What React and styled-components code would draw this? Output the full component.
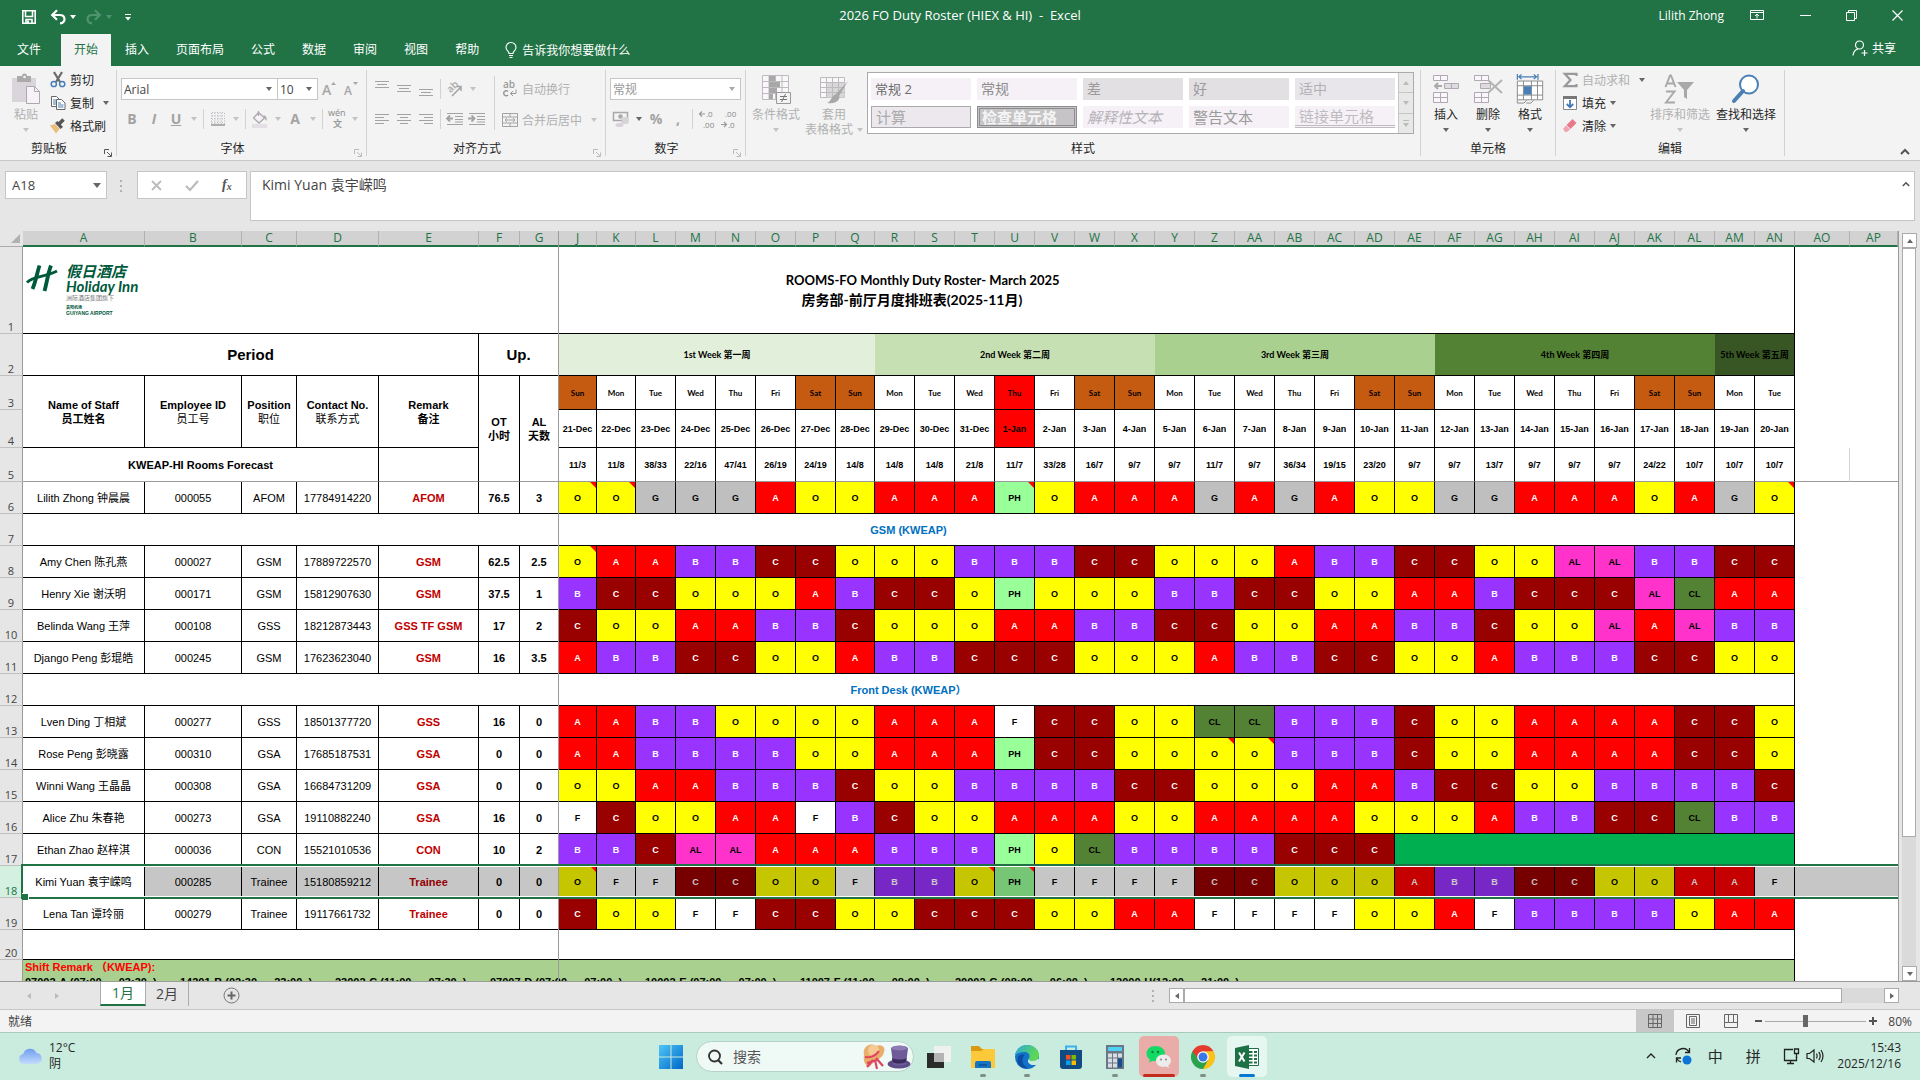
import React from "react";
import styled, { createGlobalStyle, css } from "styled-components";

const UI = `"Open Sans", "Noto Sans CJK SC", sans-serif`;
const SHEET = `"Liberation Sans", "Noto Sans CJK SC", sans-serif`;
const CALIBRI = `Lato, "Noto Sans CJK SC", sans-serif`;

const COLUMNS = [
  ["A", 122], ["B", 97], ["C", 55], ["D", 82], ["E", 100], ["F", 41], ["G", 39],
  ["J", 38], ["K", 39], ["L", 40], ["M", 40], ["N", 40], ["O", 40], ["P", 40], ["Q", 39],
  ["R", 40], ["S", 40], ["T", 40], ["U", 40], ["V", 40], ["W", 40], ["X", 40], ["Y", 40],
  ["Z", 40], ["AA", 40], ["AB", 40], ["AC", 40], ["AD", 40], ["AE", 40], ["AF", 40],
  ["AG", 40], ["AH", 40], ["AI", 40], ["AJ", 40], ["AK", 40], ["AL", 40], ["AM", 40],
  ["AN", 40], ["AO", 55],
];

const WEEKS = [
  { label: "1st Week 第一周", span: 8, bg: "#e2efda" },
  { label: "2nd Week 第二周", span: 7, bg: "#c6e0b4" },
  { label: "3rd Week 第三周", span: 7, bg: "#a9d08e" },
  { label: "4th Week 第四周", span: 7, bg: "#548235" },
  { label: "5th Week 第五周", span: 2, bg: "#375623" },
];

const DAY_NAMES = ["Sun", "Mon", "Tue", "Wed", "Thu", "Fri", "Sat"];
const HOLIDAY = 11;
const DAYS = Array.from({ length: 31 }, (_, i) => {
  const name = DAY_NAMES[i % 7];
  let bg = "#fff";
  if (name === "Sat" || name === "Sun") bg = "#c55a11";
  if (i === HOLIDAY) bg = "#ff0000";
  return { name, date: i < 11 ? `${21 + i}-Dec` : `${i - 10}-Jan`, bg };
});

const FORECAST =
  "11/3 11/8 38/33 22/16 47/41 26/19 24/19 14/8 14/8 14/8 21/8 11/7 33/28 16/7 9/7 9/7 11/7 9/7 36/34 19/15 23/20 9/7 9/7 13/7 9/7 9/7 9/7 24/22 10/7 10/7 10/7".split(" ");

const SHIFTS = {
  O: ["#ffff00", "#000"],
  A: ["#ff0000", "#fff"],
  B: ["#9933ff", "#fff"],
  C: ["#990000", "#fff"],
  G: ["#bfbfbf", "#000"],
  F: ["#ffffff", "#000"],
  PH: ["#99ff99", "#000"],
  AL: ["#ff33cc", "#000"],
  CL: ["#548235", "#000"],
};

// a star after the code marks a cell that carries a comment
const ROWS = [
  { n: 6, name: "Lilith Zhong 钟晨晨", id: "000055", pos: "AFOM", tel: "17784914220", remark: "AFOM", ot: "76.5", al: "3", s: "O* O* G G G A O O A A A PH* O A A A G A G A O O G G A A A O A G O*" },
  { n: 7, title: "GSM (KWEAP)" },
  { n: 8, name: "Amy Chen 陈孔燕", id: "000027", pos: "GSM", tel: "17889722570", remark: "GSM", ot: "62.5", al: "2.5", s: "O* A A B B C C O O O B B B C C O O O A B B C C O O AL AL B B C C" },
  { n: 9, name: "Henry Xie 谢沃明", id: "000171", pos: "GSM", tel: "15812907630", remark: "GSM", ot: "37.5", al: "1", s: "B C C O O O A B C C O PH O O O B B C C O O A A B C C C AL CL A A" },
  { n: 10, name: "Belinda Wang 王萍", id: "000108", pos: "GSS", tel: "18212873443", remark: "GSS TF GSM", ot: "17", al: "2", s: "C O O A A B B C O O O A A B B C C O O A A B B C O O AL A AL B B" },
  { n: 11, name: "Django Peng 彭琨皓", id: "000245", pos: "GSM", tel: "17623623040", remark: "GSM", ot: "16", al: "3.5", s: "A B B C C O O A B B C C C O O O A B B C C O O A B B B C C O O" },
  { n: 12, title: "Front Desk (KWEAP）" },
  { n: 13, name: "Lven Ding 丁相斌", id: "000277", pos: "GSS", tel: "18501377720", remark: "GSS", ot: "16", al: "0", s: "A A B B O O O O A A A F C C O O CL CL B B B C O O A A A A C C O" },
  { n: 14, name: "Rose Peng 彭晓露", id: "000310", pos: "GSA", tel: "17685187531", remark: "GSA", ot: "0", al: "0", s: "A A B B B B O O A A A PH C C O O O* O* B B B C O O A A A A C C O" },
  { n: 15, name: "Winni Wang 王晶晶", id: "000308", pos: "GSA", tel: "16684731209", remark: "GSA", ot: "0", al: "0", s: "O O A A B B B C O O B B B B C C O O O A A B C C O O B B B B C" },
  { n: 16, name: "Alice Zhu 朱春艳", id: "000273", pos: "GSA", tel: "19110882240", remark: "GSA", ot: "16", al: "0", s: "F C O O A A F B C O O A A A O O A A A A O O O A B B C C CL B B" },
  { n: 17, name: "Ethan Zhao 赵梓淇", id: "000036", pos: "CON", tel: "15521010536", remark: "CON", ot: "10", al: "2", s: "B B C AL AL A A A B B B PH O CL B B B B C C C" },
  { n: 18, name: "Kimi Yuan 袁宇嵘鸣", id: "000285", pos: "Trainee", tel: "15180859212", remark: "Trainee", ot: "0", al: "0", selected: true, s: "O* F F C C O O F B B O* PH* F F F F C C O O O A B B C C O O A A F" },
  { n: 19, name: "Lena Tan 谭玲丽", id: "000279", pos: "Trainee", tel: "19117661732", remark: "Trainee", ot: "0", al: "0", s: "C O O F F C C O O C C C O O A A F F F F O O A F B B B B O A A" },
];

const LEGEND = [
  "07002-A (07:00 — 03:30  )", "14201-B (02:30 — 23:00  )", "23002-C (11:00 — 07:30  )",
  "07007-D (07:00 — 07:00  )", "10002-E (07:00 — 07:00  )", "11007-F (11:00 — 08:00  )",
  "20002-G (08:00 — 06:00  )", "12000-H(12:00 — 21:00  )",
];

const GlobalStyle = createGlobalStyle`
  * { box-sizing: border-box; }
  body { margin: 0; font-family: ${UI}; font-size: 12px; color: #262626; overflow: hidden; }
  button, input, select { font: inherit; color: inherit; margin: 0; padding: 0; border: 0; background: none; border-radius: 0; }
  svg { display: block; flex: none; overflow: visible; }
`;

/* ---------- icons ---------- */

const Svg = ({ w = 16, h = w, box, children, ...rest }) => (
  <svg width={w} height={h} viewBox={box || `0 0 ${w} ${h}`} fill="none" aria-hidden="true" {...rest}>{children}</svg>
);

const Caret = ({ color = "#666", up }) => (
  <Svg w={6} h={4}><path d={up ? "M0 4h6L3 0z" : "M0 0h6L3 4z"} fill={color} /></Svg>
);

const Chevron = ({ w = 10, color = "#555", sw = 2 }) => (
  <Svg w={w} h={w * 0.6} box="0 0 10 6"><path d="M1 5l4-4 4 4" stroke={color} strokeWidth={sw} /></Svg>
);

const SaveIcon = () => (
  <Svg w={16}><path d="M1.8 1.8h12.4v12.4H1.8z M4.5 2v5.500h7V2 M5 14v-3.500h6V14" stroke="#fff" strokeWidth="1.600" /><path d="M6 11.500h2v3H6z" fill="#fff" /></Svg>
);

const UndoIcon = ({ flip, color = "#fff" }) => (
  <Svg w={16} transform={flip ? "scale(-1 1)" : undefined}>
    <path d="M2.500 6h7c3.400 0 5 2 5 4.200S13 14 10 14.300" stroke={color} strokeWidth="2.200" />
    <path d="M7 1.200L2.200 6 7 10.800" stroke={color} strokeWidth="2.200" />
  </Svg>
);

const PasteIcon = () => (
  <Svg w={30}>
    <path d="M1 4h24v24H1z" fill="#d9d5da" />
    <path d="M6 2h5a2.500 2.500 0 0 1 5 0h4v6H6z" fill="#aaa" /><circle cx="13.500" cy="3" r="1.300" fill="#f3f3f3" />
    <path d="M15.500 12.500h8l5 5v12h-13z" fill="#f7f2f9" stroke="#aaa" /><path d="M23.500 12.500v5h5" stroke="#aaa" />
  </Svg>
);

const CutIcon = () => (
  <Svg w={16}>
    <path d="M4 0l6 10M12 0L6 10" stroke="#6a6a6a" strokeWidth="2.200" />
    <circle cx="3.800" cy="12" r="2.600" stroke="#4a7fb5" strokeWidth="1.500" /><circle cx="12.200" cy="12" r="2.600" stroke="#4a7fb5" strokeWidth="1.500" />
  </Svg>
);

const CopyIcon = () => (
  <Svg w={16}>
    <path d="M1.500 1.500h5l3 3v7h-8z" fill="#fff" stroke="#666" /><path d="M3 5h4M3 7h4M3 9h4" stroke="#4a7fb5" />
    <path d="M6.500 4.500h5l3.500 3.500v6.500h-8.500z" fill="#fff" stroke="#666" /><path d="M8 8h3M8 10h5.500M8 12h5.500" stroke="#4a7fb5" />
  </Svg>
);

const PainterIcon = () => (
  <Svg w={16}>
    <path d="M0 7.500l5-1.500 4.500 5L6 15.500z" fill="#eabd78" />
    <path d="M5 5l2.500-2 5.500 6-2.500 2z" fill="#555" /><path d="M9 6l4.500-4.500" stroke="#555" strokeWidth="3.500" />
  </Svg>
);

const LauncherIcon = ({ color = "#777" }) => (
  <Svg w={8}><path d="M.5 5V.5H5 M3 3l4 4M7.500 3.500v4h-4" stroke={color} /></Svg>
);

const GlyphA = ({ big, up }) => (
  <Svg w={16}>
    <text x="1" y="14" fontSize={big ? 14 : 12} fontWeight="600" fill="#a6a6a6">A</text>
    <path d={up ? "M10 4h5l-2.500-3z" : "M10 1h5l-2.500 3z"} fill="#a6a6a6" />
  </Svg>
);

const BorderIcon = () => (
  <Svg w={14}>
    <path d="M.5 1v11M3.800 1v11M7 1v11M10.300 1v11M13.500 1v11M1 .5h12M1 3.800h12M1 7h12M1 10.300h12" stroke="#b9b4bb" strokeDasharray="1 1.500" />
    <path d="M0 13h14" stroke="#999" strokeWidth="1.500" />
  </Svg>
);

const FillIcon = () => (
  <Svg w={18}>
    <path d="M1 14h15v4H1z" fill="#e4dfe6" />
    <path d="M7.500 2.500l6 5.500-5.500 5L2.500 8z M7.500 6V1" stroke="#aaa" strokeWidth="1.300" fill="#f7f2f9" /><path d="M12.500 5c2 .5 4 3 3 6l-2-3z" fill="#aaa" />
  </Svg>
);

const AlignIcon = ({ lines }) => (
  <Svg w={16}>
    {lines.map(([x, y, w]) => <path key={y} d={`M${x} ${y + 0.5}h${w}`} stroke="#a3a3a3" />)}
  </Svg>
);

const OrientIcon = () => (
  <Svg w={18}>
    <text x="2" y="11" fontSize="10" fontWeight="600" fill="#aaa" transform="rotate(-45 6 9)">ab</text>
    <path d="M6 16L15 7M15 11V6.500h-4.500" stroke="#a3a3a3" strokeWidth="1.500" />
  </Svg>
);

const WrapIcon = () => (
  <Svg w={16}>
    <text x="1" y="7" fontSize="10" fontWeight="600" fill="#999">ab</text>
    <path d="M6 10.500a2.500 2.500 0 1 0 0 3.500" stroke="#999" strokeWidth="1.500" />
    <path d="M14 8.500v4H8.500M11 10l-2.500 2.500L11 15" stroke="#999" />
  </Svg>
);

const IndentIcon = ({ right }) => (
  <Svg w={18}>
    <path d="M1 3.500h16M9 6.500h8M9 9.500h8M1 14.500h16M9 12h8" stroke="#a3a3a3" />
    <path d={right ? "M0 8.500h6M3.500 5.500l3 3-3 3" : "M1 8.500h6M4 5.500l-3 3 3 3"} stroke="#a3a3a3" strokeWidth="1.800" />
  </Svg>
);

const MergeIcon = () => (
  <Svg w={16}>
    <path d="M.5 1.500h15v13H.5zM.5 5h15M.5 11h15M8 1.500V5M8 11v3.500" stroke="#a3a3a3" />
    <path d="M3 8h10M5 6L3 8l2 2M11 6l2 2-2 2" stroke="#a3a3a3" />
  </Svg>
);

const MoneyIcon = () => (
  <Svg w={18}>
    <path d="M1.500 2.500h14v8h-14z" stroke="#a8a8a8" strokeWidth="1.500" /><circle cx="8.500" cy="6.500" r="2.200" fill="#a8a8a8" />
    <g fill="#d8d3d9"><ellipse cx="13" cy="9" rx="4" ry="2" /><ellipse cx="13" cy="12" rx="4" ry="2" /><ellipse cx="7.500" cy="15" rx="4" ry="2" /></g>
  </Svg>
);

const DecimalIcon = ({ more }) => (
  <Svg w={18} h={20}>
    <text x={more ? 8 : 5} y="8" fontSize="8" fill="#888">{more ? ".0" : ".00"}</text>
    <text x={more ? 5 : 8} y="19" fontSize="8" fill="#888">{more ? ".00" : ".0"}</text>
    <path d={more ? "M1 5h6M4 2.500L1.500 5 4 7.500" : "M1 15.500h6M4 13l2.500 2.500L4 18"} stroke="#999" strokeWidth="1.200" />
  </Svg>
);

const CondIcon = () => (
  <Svg w={30}>
    <path d="M1.500 1.500h26v24h-26zM1.500 7.500h26M1.500 13.500h26M1.500 19.500h26M8 1.500v24M14.500 1.500v24M21 1.500v24" stroke="#bcbcbc" fill="#faf6fb" />
    <path d="M8 2h6v5H8zM8 8h11v5H8zM8 14h8v5H8zM8 20h4v5H8z" fill="#a8a8a8" />
    <path d="M15.500 18.500h14v11h-14z" fill="#f3f3f3" stroke="#999" /><path d="M19 22.500h7M19 25.500h7M24.500 20l-4 8" stroke="#777" />
  </Svg>
);

const TableFmtIcon = () => (
  <Svg w={30}>
    <path d="M1.500 3.500h24v20h-24z" fill="#faf6fb" stroke="#bcbcbc" /><path d="M7.500 8.500h18v15h-18z" fill="#d9d6da" />
    <path d="M1.500 8.500h24M1.500 13.500h24M1.500 18.500h24M7.500 3.500v20M13.500 3.500v20M19.500 3.500v20" stroke="#bcbcbc" />
    <path d="M29 7l-9 15-3-2z" fill="#a8a8a8" /><path d="M17 20c3 0 4 2 3 5-2 4-7 5-12 4 4-1 4-7 9-9z" fill="#a8a8a8" />
  </Svg>
);

const InsertIcon = () => (
  <Svg w={28} h={30}>
    <path d="M1.500 1.500h14v5h-14zM8.500 1.500v5M1.500 18.500h14v10h-14zM8.500 18.500v10M1.500 23.500h14" stroke="#b0a8b2" fill="#faf6fb" />
    <path d="M12.500 9.500h14v5h-14zM19.500 9.500v5" stroke="#b0a8b2" fill="#e0dbe1" /><path d="M3 12h7M6 9l-3 3 3 3" stroke="#aaa" strokeWidth="2" />
  </Svg>
);

const DeleteIcon = () => (
  <Svg w={30}>
    <path d="M1.500 1.500h14v5h-14zM8.500 1.500v5M1.500 18.500h14v10h-14zM8.500 18.500v10M1.500 23.500h14" stroke="#b0a8b2" fill="#faf6fb" />
    <path d="M7.500 9.500h10v5h-10z" stroke="#b0a8b2" fill="#e0dbe1" /><path d="M15 6l14 13M29 6L15 19" stroke="#b3b3b3" strokeWidth="2" />
  </Svg>
);

const FormatIcon = () => (
  <Svg w={30} h={32}>
    <path d="M1.500 0v6M23.500 0v6M3 3h19M6 .5L3 3l3 2.500M19 .5L22 3l-3 2.500" stroke="#4a7fb5" strokeWidth="1.300" />
    <path d="M1.500 7.500h27v20h-27zM1.500 12.500h27M1.500 22.500h27M8 7.500v20M16.500 7.500v20M23 7.500v20" stroke="#888" fill="#fff" />
    <path d="M8.500 13h8v9h-8z" fill="#4a7fb5" /><path d="M1.500 28v3h7l3-3M11 31h5l3-3" stroke="#888" />
  </Svg>
);

const SumIcon = () => <Svg w={16}><path d="M14.500 4V1.800H2.800L8.500 8l-5.700 6.200h11.700V12" stroke="#999" strokeWidth="2.200" /></Svg>;

const FillDownIcon = () => (
  <Svg w={16}>
    <path d="M1.500 1.500h13v13h-13z" fill="#fff" stroke="#888" /><path d="M1 1h14v3H1z" fill="#777" /><path d="M8 5v7M4.800 9L8 12.300 11.200 9" stroke="#3f78b4" strokeWidth="1.800" />
  </Svg>
);

const EraserIcon = () => (
  <Svg w={16}><path d="M10.500 1l4 4-6 6-4-4z" fill="#e8798c" /><path d="M4 7.500l4 4-3 2.500H3L1 11z" fill="#f0a3b0" /></Svg>
);

const SortIcon = () => (
  <Svg w={32} h={30}>
    <path d="M1.500 13L6 1.500h1L11.500 13M3.500 9.500h6M2 17.500h8.500L2 28.500h9" stroke="#a8a8a8" strokeWidth="1.900" />
    <path d="M13 8h17l-7 8v9l-3-2v-7z" fill="#a8a8a8" />
  </Svg>
);

const FindIcon = () => (
  <Svg w={30}><circle cx="18" cy="10.500" r="9" fill="#fff" stroke="#4a7fb5" strokeWidth="2" /><path d="M12 17L3 27" stroke="#4a7fb5" strokeWidth="4" strokeLinecap="round" /></Svg>
);

const HMark = () => (
  <Svg w={32} h={28}>
    <path d="M12.500 1.500C10 9 9 17 5.500 25M24 1.500C21 9 20 18 17.500 27" stroke="#00593b" strokeWidth="3.800" />
    <path d="M0 18.500C7 11 17 14 30 7" stroke="#00593b" strokeWidth="2.800" />
  </Svg>
);

const CloudIcon = () => (
  <Svg w={26} h={18}>
    <defs><linearGradient id="cloud" x1="0" y1="0" x2="0" y2="1"><stop offset="0" stopColor="#6f9df0" /><stop offset="1" stopColor="#c4dbfb" /></linearGradient></defs>
    <path d="M6 17a5 5 0 0 1-.8-9.900A7 7 0 0 1 18.500 6 5.600 5.600 0 0 1 19.500 17z" fill="url(#cloud)" />
  </Svg>
);

const StartIcon = () => (
  <Svg w={24}>
    <defs><linearGradient id="win" x1="0" y1="0" x2="1" y2="1"><stop offset="0" stopColor="#4ec6f7" /><stop offset="1" stopColor="#0067c8" /></linearGradient></defs>
    <path d="M0 0h11.500v11.500H0zM12.500 0H24v11.500H12.500zM0 12.500h11.500V24H0zM12.500 12.500H24V24H12.500z" fill="url(#win)" />
  </Svg>
);

const HatsIcon = () => (
  <Svg w={50} h={28}>
    <path d="M3 12C1 4 9-1 15 3c5-2 10 1 8 6-1 5-6 8-9 9l-6 6c-4-2-6-6-5-12z" fill="#e9ad6c" /><path d="M9 3c3-2 9-1 9 4s-5 7-8 6-4-8-1-10z" fill="#f6cb93" />
    <path d="M4 14c5 1 11-1 14-6M6 20l10-3M15 15l7 8M14 17l2 9M12 17l-6 7" stroke="#e0455f" strokeWidth="2.200" />
    <ellipse cx="38" cy="21" rx="11.500" ry="4.500" fill="#5d4a86" /><path d="M30 5c4-3 13-3 17 0l-2 16c-3 2-10 2-13 0z" fill="#6f5b9a" /><ellipse cx="38.500" cy="5" rx="8" ry="2.500" fill="#8e7cb5" /><path d="M31 15c4 2 11 2 14.500 0l-.5 4c-4 2-10 2-13.500 0z" fill="#3a2c5c" />
  </Svg>
);

const TaskViewIcon = () => (
  <Svg w={24}><path d="M0 8h17v15H0z" fill="#2b2b2b" /><path d="M7 1h17v16H7z" fill="#f1f1f1" fillOpacity=".93" /><path d="M7 8h10v9H7z" fill="#b4b4b4" /></Svg>
);

const FolderIcon = () => (
  <Svg w={26} h={24}>
    <path d="M1 1h8l3 3h13v8H1z" fill="#d99a12" /><path d="M1 6h10l3-2h11v19H1z" fill="#fcc93a" /><path d="M5 23v-5q0-2 2-2h12q2 0 2 2v5z" fill="#1575c4" /><path d="M9 20h8" stroke="#0c4f8c" strokeWidth="1.500" />
  </Svg>
);

const EdgeIcon = () => (
  <Svg w={24}>
    <defs><linearGradient id="edge" x1="0" y1="0" x2="1" y2=".4"><stop offset="0" stopColor="#2aa7e6" /><stop offset="1" stopColor="#5fd94d" /></linearGradient></defs>
    <circle cx="12" cy="12" r="12" fill="#1272c9" />
    <path d="M0 11C1 4 6 0 12 0c7 0 12 5 12 10 0 4-3 6-6.500 6-2.500 0-4-1-3.500-2.500C15 12 15 7 9.500 7 4 7 1 9 0 11z" fill="url(#edge)" />
    <path d="M9.500 10c-4 4-2 11 4 13.500C5 24 1 18 3 12c1-2 4-3 6.500-2z" fill="#0c4da2" />
    <path d="M14 13.500c-.5 1.500 1 2.500 3.500 2.500 2 0 4-.8 6-2.500l1 4c-1 2-3 2.500-5.500 2.500-4 .5-8-3-5-6.500z" fill="#c9ecdf" />
  </Svg>
);

const StoreIcon = () => (
  <Svg w={24}>
    <path d="M7 6V1.500h10V6" stroke="#3ab0ee" strokeWidth="2" /><path d="M1 5h22v16q0 3-3 3H4q-3 0-3-3z" fill="#124a82" />
    <path d="M7 10h4.500v4.500H7z" fill="#f25022" /><path d="M12.500 10H17v4.500h-4.500z" fill="#7fba00" /><path d="M7 15.500h4.500V20H7z" fill="#00a4ef" /><path d="M12.500 15.500H17V20h-4.500z" fill="#ffb900" />
  </Svg>
);

const CalcIcon = () => (
  <Svg w={18} h={24}>
    <path d="M0 0h18v24H0z" fill="#6b7784" /><path d="M2 2h14v4H2z" fill="#4cd0f5" />
    <path d="M2 8.500h4v4H2zM7 8.500h4v4H7zM12 8.500h4v4h-4zM2 13.500h4v4H2zM7 13.500h4v4H7zM2 18.500h4v4H2zM7 18.500h4v4H7z" fill="#d7dde3" /><path d="M12 13.500h4v9h-4z" fill="#134f8c" />
  </Svg>
);

const WeChatIcon = () => (
  <Svg w={26} h={24}>
    <path d="M9.500 1C4 1 .5 4.500.5 8.500c0 2.500 1.300 4.500 3.300 6L3 17.500l3.500-1.800c1 .3 2 .4 3 .4 5.500 0 9.500-3.500 9.500-7.600S15 1 9.500 1z" fill="#14d964" />
    <path d="M17.500 9.500c-4.300 0-7.500 2.800-7.500 6.300s3.200 6.200 7.500 6.200c1 0 1.900-.1 2.700-.4L23 23l-.7-2.600c1.600-1.100 2.700-2.700 2.700-4.600 0-3.500-3.200-6.300-7.500-6.300z" fill="#ececec" />
    <g fill="#0a7a3a"><circle cx="6.500" cy="7" r="1.200" /><circle cx="12" cy="7" r="1.200" /></g><g fill="#888"><circle cx="15" cy="14.500" r="1" /><circle cx="20" cy="14.500" r="1" /></g>
  </Svg>
);

const ChromeIcon = () => (
  <Svg w={24}>
    <path d="M12 12L1.600 6A12 12 0 0 1 22.400 6z" fill="#e33b2e" /><path d="M12 12L22.400 6A12 12 0 0 1 12 24z" fill="#fbc116" /><path d="M12 12v12A12 12 0 0 1 1.600 6z" fill="#2ba24c" />
    <path d="M12 6h10.400L17.200 15z" fill="#fbc116" /><path d="M17.200 15L12 24 6.800 15z" fill="#2ba24c" /><path d="M1.600 6l5.200 9L12 6z" fill="#2ba24c" /><path d="M1.600 6h20.800L12 6.500 6.500 13z" fill="#e33b2e" />
    <circle cx="12" cy="12" r="5.800" fill="#fff" /><circle cx="12" cy="12" r="4.500" fill="#3b78e7" />
  </Svg>
);

const ExcelIcon = () => (
  <Svg w={24}>
    <path d="M12 3.500h11.500v17H12z" fill="#fff" stroke="#1e7145" /><path d="M14 7h3.500M19 7h3M14 10.500h3.500M19 10.500h3M14 14h3.500M19 14h3M14 17.500h3.500M19 17.500h3" stroke="#1e7145" strokeWidth="1.800" />
    <path d="M0 3l14-3v24L0 21z" fill="#1e7145" /><path d="M4 7.500l5.500 9M9.500 7.500l-5.500 9" stroke="#fff" strokeWidth="2" />
  </Svg>
);

const SyncIcon = () => (
  <Svg w={18}>
    <path d="M2 8a7 7 0 0 1 13-3M15.500 1v4.500H11M2.500 15.500V11H7M2.800 11.500A7 7 0 0 0 7 15" stroke="#222" strokeWidth="1.300" /><circle cx="13" cy="13" r="4.500" fill="#0a74d8" />
  </Svg>
);

const MonitorIcon = () => (
  <Svg w={18}><path d="M11 2.500H2.500v11h12v-4M8.500 13.500V16M5 16.500h7" stroke="#222" strokeWidth="1.300" /><path d="M12.500 2h4v4.500h-4zM14.500 6.500V11" stroke="#222" strokeWidth="1.300" /></Svg>
);

const SpeakerIcon = () => (
  <Svg w={18}><path d="M1 6.500h2.500L8 3v12l-4.500-3.500H1zM10.500 6.500q1.500 2.500 0 5M12.800 4.800q2.800 4.200 0 8.400M15 3q4 6 0 12" stroke="#222" strokeWidth="1.200" /></Svg>
);

/* ---------- window chrome ---------- */

const Window = styled.div`
  display: flex;
  flex-direction: column;
  height: 100vh;
  background: #e6e6e6;
`;

const TitleBar = styled.header`
  display: grid;
  grid-template-columns: 1fr auto 1fr;
  align-items: center;
  height: 34px;
  padding-bottom: 4px;
  background: #217346;
  color: #fff;
  h1 { margin: 0; font-size: 13px; font-weight: 400; white-space: pre; }
`;

const QuickAccess = styled.div`
  display: flex;
  align-items: center;
  padding: 4px 0 0 21px;
  button { display: flex; align-items: center; }
  button:nth-child(2) { margin-left: 13px; }
  button:nth-child(3) { margin-left: 4px; }
  button:nth-child(4) { margin-left: 10px; }
  button:nth-child(5) { margin-left: 4px; }
  button:nth-child(6) { margin-left: 13px; }
`;

const WindowButtons = styled.div`
  display: flex;
  justify-content: flex-end;
  align-items: center;
  span { margin-right: 16px; }
  button { display: flex; width: 46px; height: 30px; align-items: center; justify-content: center; }
  button:first-of-type { width: 34px; margin-right: 8px; }
`;

const TabBar = styled.nav`
  display: flex;
  height: 32px;
  background: #217346;
  color: #fff;
`;

const RibbonTab = styled.button`
  height: 32px;
  padding: 0 13px 2px;
  font-size: 12px;
  & + & { margin-right: 1px; }
  ${(p) => p.$file && css`padding: 0 20px 2px 17px;`}
  ${(p) => p.$active && css`background: #f3f3f3; color: #217346;`}
`;

const TellMe = styled.button`
  display: flex;
  align-items: center;
  gap: 5px;
  margin-left: 12px;
`;

const Share = styled(TellMe)`
  margin-left: auto;
  margin-right: 24px;
  padding-bottom: 4px;
  gap: 4px;
`;

const Ribbon = styled.section`
  display: flex;
  height: 95px;
  padding-top: 4px;
  background: #f3f3f3;
  border-bottom: 1px solid #c8c8c8;
`;

const Group = styled.div`
  display: flex;
  flex-direction: column;
  width: ${(p) => p.$w}px;
  height: 86px;
  border-right: 1px solid #d2d2d2;
`;

const GroupBody = styled.div`
  display: flex;
  flex: none;
  height: 68px;
  padding: 0 4px;
`;

const GroupFoot = styled.div`
  position: relative;
  height: 18px;
  line-height: 22px;
  text-align: center;
  padding-right: ${(p) => (p.$plain ? 0 : 18)}px;
  svg { position: absolute; right: 4px; top: 11px; }
`;

const BigButton = styled.button`
  display: flex;
  flex-direction: column;
  align-items: center;
  width: ${(p) => p.$w || 42}px;
  padding-top: 4px;
  line-height: 15px;
  color: ${(p) => (p.disabled ? "#b1b1b1" : "#262626")};
  > svg:first-child { height: 30px; margin-bottom: 3px; }
  span { display: flex; align-items: center; gap: 4px; height: 15px; white-space: nowrap; }
`;

const SmallList = styled.div`
  display: flex;
  flex-direction: column;
`;

const SmallButton = styled.button`
  display: flex;
  align-items: center;
  gap: 4px;
  height: 23px;
  padding: 0 2px 2px;
  white-space: nowrap;
  color: ${(p) => (p.disabled ? "#b1b1b1" : "#262626")};
  svg:last-child:not(:first-child) { margin-left: ${(p) => (p.$far ? 5 : 0)}px; }
`;

const ToolRows = styled.div`
  display: flex;
  flex-direction: column;
  gap: 8px;
  padding-top: 8px;
`;

const ToolRow = styled.div`
  display: flex;
  align-items: center;
  height: 22px;
`;

const ToolButton = styled.button`
  display: flex;
  align-items: center;
  justify-content: center;
  width: 22px;
  height: 22px;
  font-size: 14px;
  line-height: 18px;
  color: #a3a3a3;
`;

const DropButton = styled(ToolButton)`
  width: 13px;
`;

const Rule = styled.i`
  width: 1px;
  height: ${(p) => (p.$tall ? 54 : 20)}px;
  margin: ${(p) => (p.$tall ? "6px 5px 0 6px" : "0 3px")};
  background: #d2d2d2;
`;

const Picker = styled.label`
  position: relative;
  display: flex;
  width: ${(p) => p.$w}px;
  height: ${(p) => p.$h || 22}px;
  background: #fff;
  border: 1px solid #c6c6c6;
  color: ${(p) => (p.$dim ? "#999" : "#444")};
  font-size: ${(p) => p.$fs || 12}px;
  & + & { border-left: 0; }
  select { appearance: none; width: 100%; padding-left: ${(p) => (p.$h ? 6 : 2)}px; outline: 0; }
  svg { position: absolute; right: 5px; top: 50%; margin-top: -2px; pointer-events: none; }
`;

const Gallery = styled.div`
  display: flex;
  flex: 1;
  height: 62px;
  margin: 2px 2px 0 1px;
  border: 1px solid #ababab;
  background: #fff;
`;

const StyleGrid = styled.div`
  display: grid;
  grid-template-columns: repeat(5, 1fr);
  grid-template-rows: 22px 22px;
  gap: 6px;
  flex: 1;
  padding: 5px 3px;
`;

const StyleCell = styled.button`
  padding-left: 4px;
  text-align: left;
  line-height: 18px;
  font-size: ${(p) => p.$fs || 15}px;
  background: ${(p) => p.$bg || "#f5f1f7"};
  color: ${(p) => p.$color};
  font-style: ${(p) => (p.$italic ? "italic" : "normal")};
  ${(p) => p.$box && css`border: 1px solid #aaa;`}
  ${(p) => p.$check && css`border: 3px double #8e8e8e; font-weight: 700; padding-left: 2px; line-height: 14px;`}
  ${(p) => p.$link && css`border-bottom: 3px double #c0bcc2;`}
`;

const GalleryScroll = styled.div`
  display: flex;
  flex-direction: column;
  width: 15px;
  border-left: 1px solid #c6c6c6;
  background: #e8e8e8;
  button { flex: 1; display: flex; flex-direction: column; gap: 2px; align-items: center; justify-content: center; }
  button + button { border-top: 1px solid #c6c6c6; }
`;

const Collapse = styled.button`
  align-self: flex-end;
  margin-left: auto;
  padding: 5px 10px;
`;

const FormulaBar = styled.section`
  display: flex;
  height: 70px;
  padding: 10px 5px 0;
`;

const Dots = styled.i`
  width: 2px;
  height: 12px;
  margin: ${(p) => p.$m};
  background: repeating-linear-gradient(#b0b0b0 0 2px, transparent 2px 5px);
`;

const FxBox = styled.div`
  display: flex;
  align-items: center;
  justify-content: space-around;
  width: 110px;
  height: 28px;
  margin-right: 3px;
  background: #fff;
  border: 1px solid #c6c6c6;
  button { width: 36px; display: flex; justify-content: center; }
`;

const FormulaField = styled.div`
  flex: 1;
  display: flex;
  align-items: flex-start;
  height: 50px;
  background: #fff;
  border: 1px solid #c6c6c6;
  input { flex: 1; height: 24px; padding-left: 11px; font-size: 14px; color: #444; outline: 0; }
  button { padding: 10px 4px; }
`;

/* ---------- sheet ---------- */

const SheetArea = styled.main`
  display: flex;
  flex: 1;
  min-height: 0;
  overflow: hidden;
  border-bottom: 1px solid #9b9b9b;
`;

const SheetView = styled.div`
  position: relative;
  flex: 1;
  min-width: 0;
  overflow: hidden;
  background: #fff;
  border-right: 1px solid #9b9b9b;
`;

const FreezeLine = styled.i`
  position: absolute;
  top: 0;
  bottom: 0;
  left: 558px;
  width: 1px;
  background: #9b9b9b;
`;

const SelectionFrame = styled.div`
  position: absolute;
  top: 633px;
  right: 0;
  left: 21px;
  height: 35px;
  border: 2px solid #217346;
  border-right: 0;
  box-shadow: inset 0 1px #fff, inset 0 -1px #fff;
  pointer-events: none;
  &::after {
    content: "";
    position: absolute;
    left: -1px;
    bottom: -3px;
    width: 6px;
    height: 6px;
    background: #217346;
    border-top: 1px solid #fff;
    border-right: 1px solid #fff;
  }
`;

const Grid = styled.table`
  width: 100%;
  table-layout: fixed;
  border-collapse: separate;
  border-spacing: 0;
  font-family: ${SHEET};
  font-size: 11px;
  line-height: 14px;
  color: #000;
  th, td { padding: 0; text-align: center; white-space: nowrap; }
`;

const ColHead = styled.th`
  height: 16px;
  font: 12px/14px ${UI};
  color: #217346;
  background: #d2d2d2;
  border-right: 1px solid #b1b1b1;
  border-bottom: 2px solid #217346;
`;

const Corner = styled.th`
  background: #e6e6e6;
  border-bottom: 1px solid #ababab;
  svg { margin-left: 11px; }
`;

const RowHead = styled.th`
  vertical-align: bottom;
  font: 11px/13px ${UI};
  color: ${(p) => (p.$on ? "#217346" : "#444")};
  background: ${(p) => (p.$on ? "#d3f0e0" : "#e6e6e6")};
  border-right: 1px solid #9b9b9b;
  border-bottom: 1px solid #c0c0c0;
`;

const Row = styled.tr`
  height: ${(p) => p.$h || 32}px;
`;

const Cell = styled.td`
  border-right: 1px solid #000;
  border-bottom: 1px solid ${(p) => (p.$frozen ? "#9b9b9b" : "#000")};
  background: ${(p) => p.$bg || "#fff"};
  font-weight: ${(p) => (p.$bold ? 700 : 400)};
  font-size: ${(p) => p.$fs || 11}px;
  color: ${(p) => p.$color || "#000"};
  ${(p) => p.$dim && css`
    position: relative;
    &::before { content: ""; position: absolute; inset: 0; background: rgba(0, 0, 0, 0.225); }
  `}
`;

const Plain = styled.span`
  font-weight: 400;
`;

const ShiftCell = styled(Cell)`
  position: relative;
  font-weight: 700;
  font-size: 9px;
  ${(p) => p.$note && css`
    &::after {
      content: "";
      position: absolute;
      top: 0;
      right: 0;
      border: 3px solid #f00;
      border-left-color: transparent;
      border-bottom-color: transparent;
    }
  `}
`;

const WeekCell = styled(Cell)`
  font: 700 9px/14px ${CALIBRI};
  border-right: ${(p) => (p.$last ? "1px solid #000" : 0)};
`;

const DayCell = styled(Cell)`
  font: 700 8px/14px ${CALIBRI};
`;

const TitleCell = styled(Cell)`
  position: relative;
  font: 700 13px/20px ${CALIBRI};
  && { white-space: pre; }
`;

const SubTitle = styled.span`
  font-size: 14px;
`;

const Blank = styled.td`
  background: #fff;
  ${(p) => p.$frozen && css`border-bottom: 1px solid #9b9b9b;`}
  ${(p) => p.$rule && css`border-right: 1px solid #d4d4d4;`}
  ${(p) => p.$dim && css`background: #c6c6c6;`}
`;

const Remark = styled(Cell)`
  && { text-align: left; vertical-align: top; padding-left: 2px; line-height: 15px; white-space: pre; }
  strong { display: block; color: #f00; }
  span { display: inline-block; width: 155px; }
`;

const Logo = styled.div`
  position: absolute;
  top: 17px;
  left: 4px;
  display: flex;
  gap: 7px;
  color: #00593b;
  text-align: left;
`;

const LogoText = styled.div`
  display: flex;
  flex-direction: column;
  font: italic 700 15px/15px ${CALIBRI};
  small { font: 6px/9px ${SHEET}; color: #777; }
  b { font: 700 5px/6px ${SHEET}; }
`;

const LogoTiny = styled.span`
  font: 700 4px/5px ${SHEET};
  margin-top: 2px;
`;

const VScroll = styled.div`
  display: flex;
  flex-direction: column;
  width: 21px;
  padding: 2px 4px 0 3px;
  background: #e6e6e6;
`;

const ScrollButton = styled.button`
  display: flex;
  align-items: center;
  justify-content: center;
  width: 15px;
  height: 15px;
  flex: none;
  background: #fff;
  border: 1px solid #ababab;
  svg { transform: rotate(${(p) => p.$turn || 0}deg); }
`;

const Track = styled.div`
  flex: 1;
  display: flex;
  flex-direction: ${(p) => (p.$v ? "column" : "row")};
  background: #dadada;
  i { flex: 0 0 ${(p) => p.$size}; background: #fff; border: 1px solid #ababab; }
`;

const SheetTabs = styled.nav`
  display: flex;
  align-items: center;
  height: 27px;
  padding-right: 21px;
`;

const NavArrows = styled.div`
  display: flex;
  gap: 22px;
  width: 100px;
  padding-left: 26px;
  button:first-child svg { transform: rotate(90deg); }
  button:last-child svg { transform: rotate(-90deg); }
`;

const SheetTab = styled.button`
  align-self: flex-start;
  width: ${(p) => (p.$on ? 46 : 43)}px;
  height: 24px;
  font-size: 14px;
  line-height: 22px;
  color: #444;
  ${(p) => p.$on && css`background: #fff; color: #217346; border: 1px solid #ababab; border-top: 0; border-bottom: 2px solid #217346;`}
  ${(p) => !p.$on && css`border-right: 1px solid #ababab;`}
`;

const AddSheet = styled.button`
  margin: 0 auto 0 34px;
`;

const HScroll = styled.div`
  display: flex;
  width: 730px;
  height: 15px;
`;

const StatusBar = styled.footer`
  display: flex;
  align-items: center;
  height: 23px;
  padding: 0 8px;
  border-top: 1px solid #c6c6c6;
  background: #f3f3f3;
  color: #444;
  span { margin-right: auto; }
`;

const ViewButton = styled.button`
  display: flex;
  align-items: center;
  justify-content: center;
  width: 38px;
  height: 22px;
  background: ${(p) => (p.$on ? "#c8c8c8" : "none")};
`;

const ZoomBar = styled.div`
  display: flex;
  align-items: center;
  gap: 2px;
  margin: 0 11px 0 4px;
  input { appearance: none; width: 101px; height: 12px; background: linear-gradient(#ababab, #ababab) center / 100% 1px no-repeat; }
  input::-webkit-slider-thumb { appearance: none; width: 5px; height: 12px; background: #666; }
  button { display: flex; width: 9px; justify-content: center; }
`;

/* ---------- taskbar ---------- */

const Taskbar = styled.footer`
  display: grid;
  grid-template-columns: 1fr auto 1fr;
  align-items: center;
  height: 48px;
  background: #c9ecdf;
  border-top: 1px solid #a9c9bd;
  line-height: 16px;
`;

const Weather = styled.div`
  display: flex;
  align-items: center;
  gap: 5px;
  padding: 0 0 2px 18px;
`;

const TaskCenter = styled.div`
  display: flex;
  align-items: center;
  height: 47px;
  padding-left: 8px;
`;

const Search = styled.label`
  display: flex;
  align-items: center;
  flex: none;
  width: 218px;
  height: 31px;
  margin: 0 3px 0 13px;
  padding: 0 2px 0 10px;
  border: 1px solid #b5d3c8;
  border-radius: 16px;
  background: #eff9f5;
  input { flex: 1; min-width: 0; padding-left: 10px; font-size: 14px; outline: 0; }
  input::placeholder { color: #555; opacity: 1; }
`;

const TaskButton = styled.button`
  position: relative;
  display: flex;
  align-items: center;
  justify-content: center;
  width: 40px;
  height: 41px;
  margin: 0 2px;
  border-radius: 5px;
  background: ${(p) => p.$bg || "none"};
  ${(p) => p.$mark && css`
    &::after {
      content: "";
      position: absolute;
      bottom: 0;
      width: ${p.$long || 6}px;
      height: 3px;
      border-radius: 2px;
      background: ${p.$mark};
    }
  `}
`;

const Tray = styled.div`
  display: flex;
  align-items: center;
  justify-content: flex-end;
  padding: 0 19px 2px 0;
  button { display: flex; justify-content: center; width: 32px; font-size: 15px; }
  button:nth-of-type(4) { width: 44px; }
  button:nth-of-type(6) { width: 16px; margin-right: 14px; }
  time { text-align: right; font-size: 12px; }
`;

const DIM = "#c3c3c3";
const line = (ws, y0, dy, mid) => ws.map((w, i) => [mid ? (16 - w) / 2 : 1, y0 + i * dy, w]);

function RibbonGroups() {
  return (
    <Ribbon>
      <Group $w={117}>
        <GroupBody>
          <BigButton disabled $w={44}><PasteIcon /><span>粘贴</span><span><Caret color={DIM} /></span></BigButton>
          <SmallList>
            <SmallButton><CutIcon />剪切</SmallButton>
            <SmallButton $far><CopyIcon />复制<Caret /></SmallButton>
            <SmallButton><PainterIcon />格式刷</SmallButton>
          </SmallList>
        </GroupBody>
        <GroupFoot>剪贴板<LauncherIcon color="#555" /></GroupFoot>
      </Group>

      <Group $w={250}>
        <GroupBody>
          <ToolRows>
            <ToolRow>
              <Picker $w={157}><select aria-label="字体"><option>Arial</option></select><Caret /></Picker>
              <Picker $w={40}><select aria-label="字号"><option>10</option></select><Caret /></Picker>
              <ToolButton aria-label="增大字号"><GlyphA big up /></ToolButton>
              <ToolButton aria-label="减小字号"><GlyphA /></ToolButton>
            </ToolRow>
            <ToolRow>
              <ToolButton><b>B</b></ToolButton>
              <ToolButton><b><em>I</em></b></ToolButton>
              <ToolButton><b><u>U</u></b></ToolButton>
              <DropButton aria-label="下划线"><Caret color={DIM} /></DropButton>
              <Rule />
              <ToolButton aria-label="边框"><BorderIcon /></ToolButton>
              <DropButton aria-label="边框选项"><Caret color={DIM} /></DropButton>
              <Rule />
              <ToolButton aria-label="填充颜色"><FillIcon /></ToolButton>
              <DropButton aria-label="填充选项"><Caret color={DIM} /></DropButton>
              <ToolButton><b>A</b></ToolButton>
              <DropButton aria-label="字体颜色"><Caret color={DIM} /></DropButton>
              <Rule />
              <ToolButton aria-label="拼音">
                <Svg w={18}><text x="0" y="6" fontSize="9" fill="#888">wén</text><text x="5" y="17" fontSize="9" fontWeight="700" fill="#999">文</text></Svg>
              </ToolButton>
              <DropButton aria-label="拼音选项"><Caret color={DIM} /></DropButton>
            </ToolRow>
          </ToolRows>
        </GroupBody>
        <GroupFoot>字体<LauncherIcon color="#bbb" /></GroupFoot>
      </Group>

      <Group $w={239}>
        <GroupBody>
          <ToolRows>
            <ToolRow>
              <ToolButton aria-label="顶端对齐"><AlignIcon lines={line([14, 10, 14], 0, 3, true)} /></ToolButton>
              <ToolButton aria-label="垂直居中"><AlignIcon lines={line([14, 10, 14], 4, 3, true)} /></ToolButton>
              <ToolButton aria-label="底端对齐"><AlignIcon lines={line([14, 10, 14], 8, 3, true)} /></ToolButton>
              <Rule />
              <ToolButton aria-label="方向"><OrientIcon /></ToolButton>
              <DropButton aria-label="方向选项"><Caret color={DIM} /></DropButton>
            </ToolRow>
            <ToolRow>
              <ToolButton aria-label="左对齐"><AlignIcon lines={line([14, 9, 14, 9], 3, 3)} /></ToolButton>
              <ToolButton aria-label="居中"><AlignIcon lines={line([14, 8, 14, 8], 3, 3, true)} /></ToolButton>
              <ToolButton aria-label="右对齐"><AlignIcon lines={[[1, 3, 14], [6, 6, 9], [1, 9, 14], [6, 12, 9]]} /></ToolButton>
              <Rule />
              <ToolButton aria-label="减少缩进"><IndentIcon /></ToolButton>
              <ToolButton aria-label="增加缩进"><IndentIcon right /></ToolButton>
            </ToolRow>
          </ToolRows>
          <Rule $tall />
          <ToolRows>
            <SmallButton disabled><WrapIcon />自动换行</SmallButton>
            <SmallButton disabled $far><MergeIcon />合并后居中<Caret color={DIM} /></SmallButton>
          </ToolRows>
        </GroupBody>
        <GroupFoot>对齐方式<LauncherIcon color="#bbb" /></GroupFoot>
      </Group>

      <Group $w={140}>
        <GroupBody>
          <ToolRows>
            <ToolRow>
              <Picker $w={131} $dim><select aria-label="数字格式"><option>常规</option></select><Caret color="#aaa" /></Picker>
            </ToolRow>
            <ToolRow>
              <ToolButton aria-label="会计数字格式"><MoneyIcon /></ToolButton>
              <DropButton aria-label="货币"><Caret /></DropButton>
              <ToolButton><b>%</b></ToolButton>
              <ToolButton><b>,</b></ToolButton>
              <Rule />
              <ToolButton aria-label="增加小数位数"><DecimalIcon more /></ToolButton>
              <ToolButton aria-label="减少小数位数"><DecimalIcon /></ToolButton>
            </ToolRow>
          </ToolRows>
        </GroupBody>
        <GroupFoot>数字<LauncherIcon color="#bbb" /></GroupFoot>
      </Group>

      <Group $w={675}>
        <GroupBody>
          <BigButton disabled $w={52}><CondIcon /><span>条件格式</span><span><Caret color={DIM} /></span></BigButton>
          <BigButton disabled $w={64}><TableFmtIcon /><span>套用</span><span>表格格式<Caret color={DIM} /></span></BigButton>
          <Gallery>
            <StyleGrid>
              <StyleCell $fs={13} $color="#6b6b6b">常规 2</StyleCell>
              <StyleCell $fs={14} $color="#8d8d8d">常规</StyleCell>
              <StyleCell $fs={14} $bg="#e3e0e4" $color="#9b9b9b">差</StyleCell>
              <StyleCell $fs={14} $bg="#e3e0e4" $color="#9b9b9b">好</StyleCell>
              <StyleCell $fs={14} $bg="#e9e6eb" $color="#b3b0b5">适中</StyleCell>
              <StyleCell $bg="#ece8ee" $color="#aaa" $box>计算</StyleCell>
              <StyleCell $bg="#c6c4c7" $color="#f4f4f4" $check>检查单元格</StyleCell>
              <StyleCell $color="#b5b2b7" $italic>解释性文本</StyleCell>
              <StyleCell $color="#9b9b9b">警告文本</StyleCell>
              <StyleCell $color="#bfbcc1" $link>链接单元格</StyleCell>
            </StyleGrid>
            <GalleryScroll>
              <button aria-label="上一行"><Caret up color="#bbb" /></button>
              <button aria-label="下一行"><Caret color="#bbb" /></button>
              <button aria-label="其他"><Svg w={6} h={1}><path d="M0 .5h6" stroke="#bbb" /></Svg><Caret color="#bbb" /></button>
            </GalleryScroll>
          </Gallery>
        </GroupBody>
        <GroupFoot $plain>样式</GroupFoot>
      </Group>

      <Group $w={135}>
        <GroupBody>
          <BigButton><InsertIcon /><span>插入</span><span><Caret /></span></BigButton>
          <BigButton><DeleteIcon /><span>删除</span><span><Caret /></span></BigButton>
          <BigButton><FormatIcon /><span>格式</span><span><Caret /></span></BigButton>
        </GroupBody>
        <GroupFoot $plain>单元格</GroupFoot>
      </Group>

      <Group $w={229}>
        <GroupBody>
          <SmallList>
            <SmallButton disabled $far><SumIcon />自动求和<Caret /></SmallButton>
            <SmallButton><FillDownIcon />填充<Caret /></SmallButton>
            <SmallButton><EraserIcon />清除<Caret /></SmallButton>
          </SmallList>
          <BigButton disabled $w={66}><SortIcon /><span>排序和筛选</span><span><Caret color={DIM} /></span></BigButton>
          <BigButton $w={66}><FindIcon /><span>查找和选择</span><span><Caret /></span></BigButton>
        </GroupBody>
        <GroupFoot $plain>编辑</GroupFoot>
      </Group>
      <Collapse aria-label="折叠功能区"><Chevron /></Collapse>
    </Ribbon>
  );
}

function StaffRow({ row }) {
  const dim = row.selected;
  const shifts = row.s.split(" ");
  return (
    <Row>
      <RowHead scope="row" $on={dim}>{row.n}</RowHead>
      <Cell>{row.name}</Cell>
      <Cell $dim={dim}>{row.id}</Cell>
      <Cell $dim={dim}>{row.pos}</Cell>
      <Cell $dim={dim}>{row.tel}</Cell>
      <Cell $dim={dim} $bold $color="#c00000">{row.remark}</Cell>
      <Cell $dim={dim} $bold>{row.ot}</Cell>
      <Cell $dim={dim} $bold>{row.al}</Cell>
      {shifts.map((code, i) => {
        const key = code.replace("*", "");
        const [bg, color] = SHIFTS[key];
        return <ShiftCell key={i} $bg={bg} $color={color} $note={code !== key} $dim={dim}>{key}</ShiftCell>;
      })}
      {shifts.length < 31 && <Cell colSpan={31 - shifts.length} $bg="#00b050" />}
      <Blank colSpan={2} $dim={dim} />
    </Row>
  );
}

function Roster() {
  return (
    <Grid>
      <colgroup>
        <col style={{ width: 23 }} />
        {COLUMNS.map(([name, w]) => <col key={name} style={{ width: w }} />)}
        <col />
      </colgroup>
      <thead>
        <tr>
          <Corner><Svg w={9} h={9}><path d="M9 0v9H0z" fill="#b1b1b1" /></Svg></Corner>
          {COLUMNS.map(([name]) => <ColHead key={name} scope="col">{name}</ColHead>)}
          <ColHead scope="col">AP</ColHead>
        </tr>
      </thead>
      <tbody>
        <Row $h={87}>
          <RowHead scope="row">1</RowHead>
          <TitleCell colSpan={38}>
            <Logo>
              <HMark />
              <LogoText>假日酒店<span>Holiday Inn</span><small>洲际酒店集团旗下</small><LogoTiny>贵阳机场</LogoTiny><b>GUIYANG AIRPORT</b></LogoText>
            </Logo>
            {"         ROOMS-FO Monthly Duty Roster- March 2025\n"}
            <SubTitle>{"  房务部-前厅月度排班表(2025-11月)"}</SubTitle>
          </TitleCell>
          <Blank colSpan={2} />
        </Row>
        <Row $h={42}>
          <RowHead scope="row">2</RowHead>
          <Cell colSpan={5} $bold $fs={15}>Period</Cell>
          <Cell colSpan={2} $bold $fs={15}>Up.</Cell>
          {WEEKS.map((w, i) => <WeekCell key={w.label} colSpan={w.span} $bg={w.bg} $last={i === 4}>{w.label}</WeekCell>)}
          <Blank colSpan={2} />
        </Row>
        <Row $h={34}>
          <RowHead scope="row">3</RowHead>
          <Cell rowSpan={2} $bold>Name of Staff<br />员工姓名</Cell>
          <Cell rowSpan={2} $bold>Employee ID<br /><Plain>员工号</Plain></Cell>
          <Cell rowSpan={2} $bold>Position<br /><Plain>职位</Plain></Cell>
          <Cell rowSpan={2} $bold>Contact No.<br /><Plain>联系方式</Plain></Cell>
          <Cell rowSpan={2} $bold>Remark<br />备注</Cell>
          <Cell rowSpan={3} $bold $frozen>OT<br />小时</Cell>
          <Cell rowSpan={3} $bold $frozen>AL<br />天数</Cell>
          {DAYS.map((d) => <DayCell key={d.date} $bg={d.bg}>{d.name}</DayCell>)}
          <Blank colSpan={2} />
        </Row>
        <Row $h={38}>
          <RowHead scope="row">4</RowHead>
          {DAYS.map((d, i) => <ShiftCell key={d.date} $bg={i === HOLIDAY ? "#f00" : "#fff"}>{d.date}</ShiftCell>)}
          <Blank colSpan={2} />
        </Row>
        <Row $h={34}>
          <RowHead scope="row">5</RowHead>
          <Cell colSpan={4} $bold $frozen>KWEAP-HI Rooms Forecast</Cell>
          <Cell $frozen />
          {FORECAST.map((f, i) => <ShiftCell key={i} $frozen>{f}</ShiftCell>)}
          <Blank $frozen $rule />
          <Blank $frozen />
        </Row>
        {ROWS.map((row) => row.title ? (
          <Row key={row.n}>
            <RowHead scope="row">{row.n}</RowHead>
            <Cell colSpan={38} $bold $color="#0070c0">{row.title}</Cell>
            <Blank colSpan={2} />
          </Row>
        ) : <StaffRow key={row.n} row={row} />)}
        <Row $h={30}>
          <RowHead scope="row">20</RowHead>
          <Cell colSpan={38} />
          <Blank colSpan={2} />
        </Row>
        <Row $h={60}>
          <RowHead scope="row">21</RowHead>
          <Remark colSpan={38} $bold $bg="#a9d08e">
            <strong>Shift Remark （KWEAP):</strong>
            {LEGEND.map((t) => <span key={t}>{t}</span>)}
          </Remark>
          <Blank colSpan={2} />
        </Row>
      </tbody>
    </Grid>
  );
}

export default function App() {
  return (
    <Window>
      <GlobalStyle />
      <TitleBar>
        <QuickAccess>
          <button aria-label="保存"><SaveIcon /></button>
          <button aria-label="撤消"><UndoIcon /></button>
          <button aria-label="撤消列表"><Caret color="#fff" /></button>
          <button aria-label="恢复"><UndoIcon flip color="#4f9470" /></button>
          <button aria-label="恢复列表"><Caret color="#4f9470" /></button>
          <button aria-label="自定义快速访问工具栏"><Svg w={6} h={7}><path d="M0 .5h6" stroke="#fff" /><path d="M0 3h6L3 6.500z" fill="#fff" /></Svg></button>
        </QuickAccess>
        <h1>2026 FO Duty Roster (HIEX & HI)  -  Excel</h1>
        <WindowButtons>
          <span>Lilith Zhong</span>
          <button aria-label="功能区显示选项"><Svg w={14}><path d="M.5 2.500h13v9H.5zM.5 4.500h13M7 10.500V6M5 8l2-2 2 2" stroke="#fff" /></Svg></button>
          <button aria-label="最小化"><Svg w={11} h={1}><path d="M0 .5h11" stroke="#fff" /></Svg></button>
          <button aria-label="还原"><Svg w={11}><path d="M.5 2.500h8v8h-8zM2.500 2.500v-2h8v8h-2" stroke="#fff" /></Svg></button>
          <button aria-label="关闭"><Svg w={11}><path d="M.5.5l10 10M10.500.5l-10 10" stroke="#fff" strokeWidth="1.200" /></Svg></button>
        </WindowButtons>
      </TitleBar>
      <TabBar>
        <RibbonTab $file>文件</RibbonTab>
        <RibbonTab $active>开始</RibbonTab>
        {["插入", "页面布局", "公式", "数据", "审阅", "视图", "帮助"].map((t) => <RibbonTab key={t}>{t}</RibbonTab>)}
        <TellMe>
          <Svg w={12} h={17}><path d="M4 11.500C4 9 1 8.500 1 5.500a5 5 0 0 1 10 0c0 3-3 3.500-3 6zM4 13.500h4M4.500 15.500h3" stroke="#fff" strokeWidth="1.100" /></Svg>
          告诉我你想要做什么
        </TellMe>
        <Share>
          <Svg w={16}><circle cx="7.500" cy="5" r="4" stroke="#fff" strokeWidth="1.200" /><path d="M1 15.500C1.500 11.500 3.500 9.500 6 9M12.500 10v6M9.500 13h6" stroke="#fff" strokeWidth="1.200" /></Svg>
          共享
        </Share>
      </TabBar>
      <RibbonGroups />
      <FormulaBar>
        <Picker $w={102} $h={28} $fs={13}><select aria-label="名称框"><option>A18</option></select><Svg w={8} h={5}><path d="M0 0h8L4 5z" fill="#666" /></Svg></Picker>
        <Dots $m="9px 15px 0 13px" />
        <FxBox>
          <button aria-label="取消"><Svg w={11}><path d="M1 1l9 9M10 1l-9 9" stroke="#bbb" strokeWidth="1.800" /></Svg></button>
          <button aria-label="输入"><Svg w={14} h={11}><path d="M1 6l4 4 8-9" stroke="#bbb" strokeWidth="2.200" /></Svg></button>
          <button aria-label="插入函数"><Svg w={14}><text x="1" y="11" fontSize="14" fontStyle="italic" fontWeight="700" fontFamily="Liberation Serif" fill="#555">f<tspan fontSize="10" dy="1">x</tspan></text></Svg></button>
        </FxBox>
        <FormulaField>
          <input aria-label="编辑栏" defaultValue="Kimi Yuan 袁宇嵘鸣" />
          <button aria-label="展开编辑栏"><Chevron w={8} /></button>
        </FormulaField>
      </FormulaBar>

      <SheetArea>
        <SheetView>
          <Roster />
          <FreezeLine />
          <SelectionFrame />
        </SheetView>
        <VScroll>
          <ScrollButton aria-label="向上滚动"><Caret up /></ScrollButton>
          <Track $v $size="82%"><i /></Track>
          <ScrollButton aria-label="向下滚动"><Caret /></ScrollButton>
        </VScroll>
      </SheetArea>

      <SheetTabs>
        <NavArrows>
          <button aria-label="上一张"><Caret color="#bbb" /></button>
          <button aria-label="下一张"><Caret color="#bbb" /></button>
        </NavArrows>
        <SheetTab $on>1月</SheetTab>
        <SheetTab>2月</SheetTab>
        <AddSheet aria-label="新工作表"><Svg w={17}><circle cx="8.500" cy="8.500" r="7.500" stroke="#777" /><path d="M8.500 4.500v8M4.500 8.500h8" stroke="#666" strokeWidth="2" /></Svg></AddSheet>
        <Dots $m="0 15px 0 0" />
        <HScroll>
          <ScrollButton $turn={90} aria-label="向左滚动"><Caret /></ScrollButton>
          <Track $size="94%"><i /></Track>
          <ScrollButton $turn={-90} aria-label="向右滚动"><Caret /></ScrollButton>
        </HScroll>
      </SheetTabs>

      <StatusBar>
        <span>就绪</span>
        <ViewButton $on aria-label="普通"><Svg w={14}><path d="M.5.5h13v13H.5zM.5 5h13M.5 9.500h13M5 .5v13M9.500.5v13" stroke="#666" /></Svg></ViewButton>
        <ViewButton aria-label="页面布局"><Svg w={14}><path d="M.5.5h13v13H.5zM3.500 2.500h7v9h-7zM5 5h4M5 7h4M5 9h4" stroke="#666" /></Svg></ViewButton>
        <ViewButton aria-label="分页预览"><Svg w={14}><path d="M.5.5h13v13H.5zM4.500.5v8h5v-8M9.500 8.500h4M.5 8.500h4" stroke="#666" /></Svg></ViewButton>
        <ZoomBar>
          <button aria-label="缩小"><Svg w={7} h={2}><path d="M0 1h7" stroke="#555" strokeWidth="2" /></Svg></button>
          <input type="range" aria-label="显示比例" min="0" max="200" defaultValue="78" />
          <button aria-label="放大"><Svg w={8}><path d="M0 4h8M4 0v8" stroke="#555" strokeWidth="2" /></Svg></button>
        </ZoomBar>
        80%
      </StatusBar>

      <Taskbar>
        <Weather><CloudIcon /><div>12°C<br />阴</div></Weather>
        <TaskCenter>
          <button aria-label="开始菜单"><StartIcon /></button>
          <Search>
            <Svg w={16}><circle cx="7.500" cy="7" r="5.500" stroke="#333" strokeWidth="1.800" /><path d="M11 11l4 4" stroke="#333" strokeWidth="2.200" /></Svg>
            <input placeholder="搜索" aria-label="搜索" />
            <HatsIcon />
          </Search>
          <TaskButton aria-label="任务视图"><TaskViewIcon /></TaskButton>
          <TaskButton aria-label="文件资源管理器" $mark="#7b8f88"><FolderIcon /></TaskButton>
          <TaskButton aria-label="Edge" $mark="#7b8f88"><EdgeIcon /></TaskButton>
          <TaskButton aria-label="Store"><StoreIcon /></TaskButton>
          <TaskButton aria-label="计算器" $mark="#7b8f88"><CalcIcon /></TaskButton>
          <TaskButton aria-label="微信" $bg="#e9aca9" $mark="#c42b1c" $long={32}><WeChatIcon /></TaskButton>
          <TaskButton aria-label="Chrome" $mark="#7b8f88"><ChromeIcon /></TaskButton>
          <TaskButton aria-label="Excel" $bg="#e6f6f0" $mark="#0078d4" $long={16}><ExcelIcon /></TaskButton>
        </TaskCenter>
        <Tray>
          <button aria-label="显示隐藏的图标"><Chevron color="#222" sw={1.3} /></button>
          <button aria-label="同步"><SyncIcon /></button>
          <button>中</button>
          <button>拼</button>
          <button aria-label="网络"><MonitorIcon /></button>
          <button aria-label="音量"><SpeakerIcon /></button>
          <time>15:43<br />2025/12/16</time>
        </Tray>
      </Taskbar>
    </Window>
  );
}
